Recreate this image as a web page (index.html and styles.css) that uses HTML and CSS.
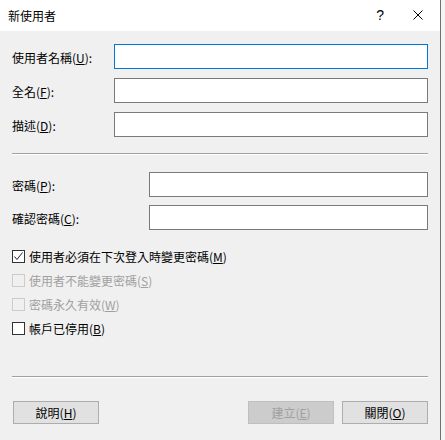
FILE: index.html
```html
<!DOCTYPE html>
<html lang="zh-Hant">
<head>
<meta charset="utf-8">
<title>新使用者</title>
<link rel="stylesheet" href="styles.css">
</head>
<body>
<div class="window">
  <div class="titlebar">
    <span class="title">新使用者</span>
    <span class="help">?</span>
    <span class="close">
      <svg width="10" height="10" viewBox="0 0 10 10"><path d="M0.5 0.5L9.5 9.5M9.5 0.5L0.5 9.5" stroke="#000" stroke-width="1" fill="none"/></svg>
    </span>
  </div>
  <div class="content">
    <div class="fields top">
      <label class="lbl">使用者名稱(<u>U</u>):</label>
      <div class="input focus"></div>
      <label class="lbl">全名(<u>F</u>):</label>
      <div class="input"></div>
      <label class="lbl">描述(<u>D</u>):</label>
      <div class="input"></div>
    </div>
    <div class="sep sep1"></div>
    <div class="fields pw">
      <label class="lbl">密碼(<u>P</u>):</label>
      <div class="input"></div>
      <label class="lbl">確認密碼(<u>C</u>):</label>
      <div class="input"></div>
    </div>
    <div class="checks">
      <div class="check">
        <span class="box"><svg width="11" height="11" viewBox="0 0 11 11"><path d="M1.5 5.5L4 8.5L9.5 1.5" stroke="#222" stroke-width="1" fill="none"/></svg></span>
        <span>使用者必須在下次登入時變更密碼(<u>M</u>)</span>
      </div>
      <div class="check disabled">
        <span class="box"></span>
        <span>使用者不能變更密碼(<u>S</u>)</span>
      </div>
      <div class="check disabled">
        <span class="box"></span>
        <span>密碼永久有效(<u>W</u>)</span>
      </div>
      <div class="check">
        <span class="box"></span>
        <span>帳戶已停用(<u>B</u>)</span>
      </div>
    </div>
    <div class="sep sep2"></div>
    <div class="buttons">
      <button class="btn">說明(<u>H</u>)</button>
      <span class="spacer"></span>
      <button class="btn disabled">建立(<u>E</u>)</button>
      <button class="btn">關閉(<u>O</u>)</button>
    </div>
  </div>
</div>
</body>
</html>
```

FILE: styles.css
```css
html, body {
  margin: 0;
  padding: 0;
}
body {
  background: #f4f4f4;
  font-family: "Noto Sans CJK TC", "Noto Sans", sans-serif;
  font-size: 12px;
  color: #000;
}
.window {
  width: 440px;
  height: 440px;
  background: #f0f0f0;
  border-right: 1px solid #707070;
  box-sizing: content-box;
}
.titlebar {
  height: 31px;
  background: #fff;
  display: flex;
  align-items: center;
  position: relative;
}
.title {
  margin-left: 8px;
  font-size: 12px;
  line-height: 31px;
}
.help {
  margin-left: auto;
  margin-right: 29px;
  font-family: "Liberation Sans", sans-serif;
  font-size: 14px;
  line-height: 31px;
}
.close {
  width: 10px;
  height: 10px;
  margin-right: 17px;
  margin-top: -1px;
  display: flex;
}
.content {
  padding: 13px 12px 0 12px;
}
.fields {
  display: grid;
  row-gap: 8px;
  align-items: center;
}
.fields.top {
  grid-template-columns: 102px 1fr;
  row-gap: 9px;
}
.fields.pw {
  grid-template-columns: 137px 1fr;
  margin-top: 17px;
}
.lbl {
  line-height: 16px;
  padding-top: 2px;
}
.input {
  height: 23px;
  background: #fff;
  border: 1px solid #7a7a7a;
}
.input.focus {
  border-color: #0078d7;
}
.sep {
  height: 1px;
  background: #a0a0a0;
  border-bottom: 1px solid #ffffff;
}
.sep1 {
  margin-top: 16px;
}
.checks {
  margin-top: 20px;
  display: flex;
  flex-direction: column;
  gap: 11px;
}
.check {
  display: flex;
  align-items: center;
  height: 13px;
  gap: 4px;
  line-height: 13px;
}
.box {
  width: 11px;
  height: 11px;
  border: 1px solid #333;
  background: #fff;
  display: flex;
  flex: none;
}
.check.disabled {
  color: #a0a0a0;
}
.check.disabled .box {
  border-color: #cccccc;
  background: #f0f0f0;
}
.sep2 {
  margin-top: 41px;
}
.buttons {
  display: flex;
  margin-top: 23px;
  gap: 8px;
  padding-left: 1px;
}
.spacer {
  flex: 1;
}
.btn {
  width: 86px;
  height: 23px;
  background: #e1e1e1;
  border: 1px solid #adadad;
  font-family: "Noto Sans CJK TC", "Noto Sans", sans-serif;
  font-size: 12px;
  color: #000;
  padding: 0;
  line-height: 21px;
}
.btn.disabled {
  background: #cccccc;
  border-color: #bfbfbf;
  color: #a0a0a0;
}
```
